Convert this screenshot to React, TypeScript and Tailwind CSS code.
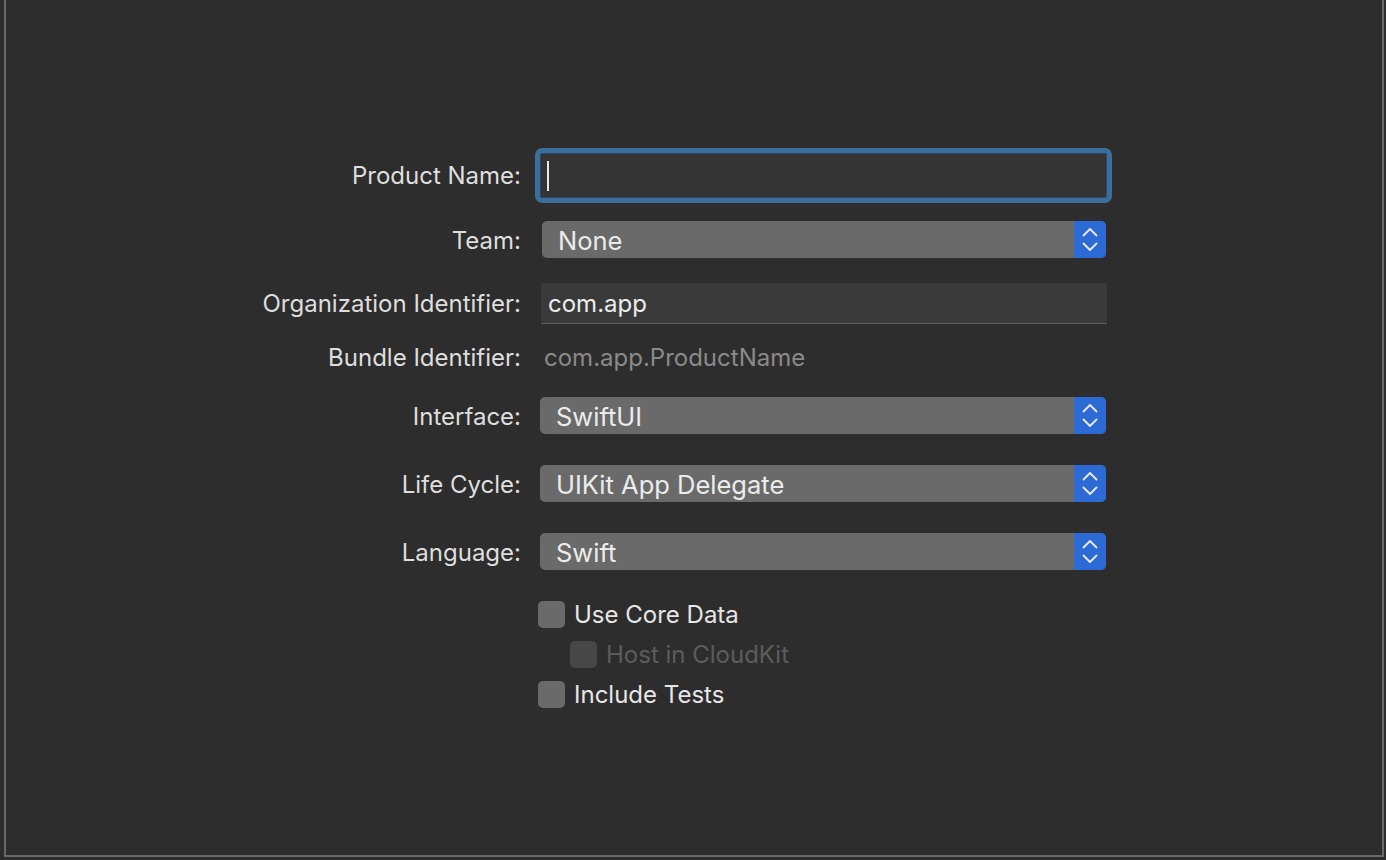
import React from "react";

const font = { fontFamily: "Inter, 'Liberation Sans', sans-serif" };

function Chevrons() {
  return (
    <svg width="32" height="37" viewBox="0 0 32 37" fill="none">
      <path
        d="M9.5 14.5 L16 8 L22.5 14.5"
        stroke="#ececec"
        strokeWidth="1.8"
        strokeLinecap="round"
        strokeLinejoin="round"
      />
      <path
        d="M9.5 22.5 L16 29 L22.5 22.5"
        stroke="#ececec"
        strokeWidth="1.8"
        strokeLinecap="round"
        strokeLinejoin="round"
      />
    </svg>
  );
}

function Popup({ value, className }: { value: string; className?: string }) {
  return (
    <div
      className={`flex h-[37px] items-stretch rounded-[5px] bg-[#6a6a6a] overflow-hidden ${className ?? ""}`}
    >
      <div className="flex flex-1 items-center pl-[16px] pt-[3px] text-[25.5px] text-[#ececec]">
        {value}
      </div>
      <div className="flex w-[32px] items-center justify-center bg-[#2c6ad6]">
        <Chevrons />
      </div>
    </div>
  );
}

function Label({ children, lift }: { children: React.ReactNode; lift?: boolean }) {
  return (
    <div
      className={`w-[515px] shrink-0 text-right text-[24px] text-[#dedede] ${
        lift ? "pt-[1px]" : "pt-[3px]"
      }`}
    >
      {children}
    </div>
  );
}

function Checkbox({
  label,
  disabled,
  className,
}: {
  label: string;
  disabled?: boolean;
  className?: string;
}) {
  return (
    <div className={`flex h-[28px] items-center ${className ?? ""}`}>
      <div
        className={`h-[27px] w-[27px] rounded-[5px] ${
          disabled ? "bg-[#474747]" : "bg-[#6a6a6a]"
        }`}
      />
      <span
        className={`ml-[9px] pt-[1px] text-[24px] ${
          disabled ? "text-[#5c5c5c]" : "text-[#e6e6e6]"
        }`}
      >
        {label}
      </span>
    </div>
  );
}

export default function App() {
  return (
    <div className="h-[860px] w-[1386px] bg-[#2d2d2d] pl-[4px]" style={font}>
      <div className="flex h-[857px] w-[1380px] flex-col border-x-2 border-b-2 border-[#686868] pt-[148px]">
        {/* Product Name */}
        <div className="flex h-[55px] items-center">
          <Label lift>Product Name:</Label>
          <div className="ml-[14px] w-[577px] rounded-[7px] border-[5px] border-[#3c6e9c] bg-[#27496a] p-[1px]">
            <div className="flex h-[43px] items-center bg-[#343434] pl-[6px]">
              <div className="h-[30px] w-[2px] bg-[#e8e8e8]" />
            </div>
          </div>
        </div>

        {/* Team */}
        <div className="mt-[18px] flex h-[37px] items-center">
          <Label>Team:</Label>
          <Popup value="None" className="ml-[21px] w-[564px]" />
        </div>

        {/* Organization Identifier */}
        <div className="mt-[25px] flex h-[41px] items-center">
          <Label lift>Organization Identifier:</Label>
          <div className="ml-[20px] flex h-[41px] w-[566px] items-center border-b border-[#5e5e5e] bg-[#3a3a3a] pl-[7px] pt-[1px] text-[24px] text-[#ececec]">
            com.app
          </div>
        </div>

        {/* Bundle Identifier */}
        <div className="mt-[18px] flex h-[30px] items-center">
          <Label lift>Bundle Identifier:</Label>
          <div className="ml-[23px] pt-[1px] text-[24px] text-[#8a8a8a]">
            com.app.ProductName
          </div>
        </div>

        {/* Interface */}
        <div className="mt-[25px] flex h-[37px] items-center">
          <Label>Interface:</Label>
          <Popup value="SwiftUI" className="ml-[19px] w-[566px]" />
        </div>

        {/* Life Cycle */}
        <div className="mt-[31px] flex h-[37px] items-center">
          <Label>Life Cycle:</Label>
          <Popup value="UIKit App Delegate" className="ml-[19px] w-[566px]" />
        </div>

        {/* Language */}
        <div className="mt-[31px] flex h-[37px] items-center">
          <Label>Language:</Label>
          <Popup value="Swift" className="ml-[19px] w-[566px]" />
        </div>

        {/* Options */}
        <div className="ml-[532px] mt-[30px] flex flex-col">
          <Checkbox label="Use Core Data" />
          <Checkbox label="Host in CloudKit" disabled className="ml-[32px] mt-[12px]" />
          <Checkbox label="Include Tests" className="mt-[12px]" />
        </div>
      </div>
    </div>
  );
}
